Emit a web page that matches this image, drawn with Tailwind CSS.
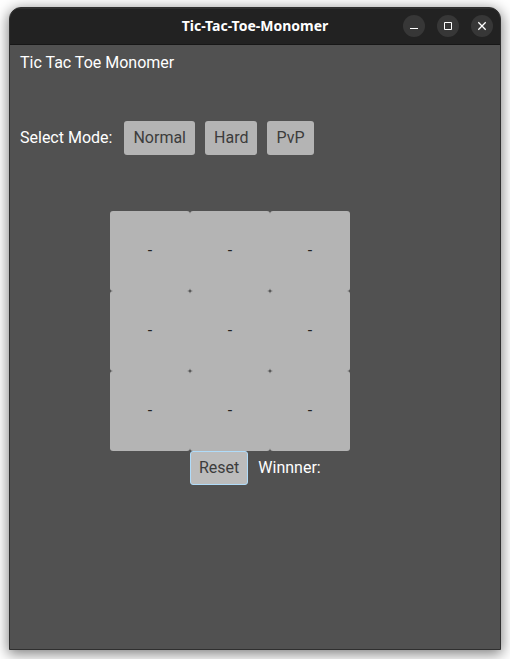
<!DOCTYPE html>
<html lang="en">
<head>
<meta charset="utf-8">
<meta name="viewport" content="width=device-width, initial-scale=1">
<title>Tic-Tac-Toe-Monomer</title>
<script src="https://cdn.jsdelivr.net/npm/@tailwindcss/browser@4"></script>
</head>
<body class="flex min-h-screen flex-col bg-white px-[9px] pt-[7px] pb-[9px] font-['Roboto',sans-serif] text-base text-white">
<div class="flex flex-1 flex-col overflow-hidden rounded-t-xl border border-[#2f2f2f] bg-[#515151] shadow-[0_3px_14px_1px_rgba(0,0,0,0.5)]">
  <header class="grid h-[37px] grid-cols-[1fr_auto_1fr] items-center border-t border-b border-t-[#303030] border-b-[#171717] bg-[#222222] px-[7px] pb-px">
    <h1 class="col-start-2 font-['Noto_Sans',sans-serif] text-sm font-bold">Tic-Tac-Toe-Monomer</h1>
    <div class="flex justify-end gap-3">
      <button type="button" aria-label="Minimize" class="size-[22px] rounded-full bg-[#373737]">
        <svg class="size-[22px]" viewBox="0 0 22 22" fill="none" stroke="#fff"><path d="M7 13.5h8"/></svg>
      </button>
      <button type="button" aria-label="Maximize" class="size-[22px] rounded-full bg-[#373737]">
        <svg class="size-[22px]" viewBox="0 0 22 22" fill="none" stroke="#fff"><path d="M7.5 7.5h7v7h-7z"/></svg>
      </button>
      <button type="button" aria-label="Close" class="size-[22px] rounded-full bg-[#373737]">
        <svg class="size-[22px]" viewBox="0 0 22 22" fill="none" stroke="#fff" stroke-width="1.3"><path d="M7.3 7.3l7.4 7.4M14.7 7.3l-7.4 7.4"/></svg>
      </button>
    </div>
  </header>
  <main class="px-2.5 pt-1.5">
    <p class="leading-6">Tic Tac Toe Monomer</p>
    <div class="mt-[46px] flex items-center gap-2.5" role="group" aria-labelledby="mode">
      <span id="mode" class="mr-0.5">Select Mode:</span>
      <button type="button" class="h-[34px] rounded-[3px] bg-[#b4b4b4] px-[9px] text-[#3c3c3c]">Normal</button>
      <button type="button" class="h-[34px] rounded-[3px] bg-[#b4b4b4] px-[9px] text-[#3c3c3c]">Hard</button>
      <button type="button" class="h-[34px] rounded-[3px] bg-[#b4b4b4] px-[9px] text-[#3c3c3c]">PvP</button>
    </div>
    <div class="mt-14 ml-[90px] grid w-60 grid-cols-3 text-[#222222]">
      <button type="button" class="h-20 rounded-[3px] bg-[#b4b4b4]">-</button>
      <button type="button" class="h-20 rounded-[3px] bg-[#b4b4b4]">-</button>
      <button type="button" class="h-20 rounded-[3px] bg-[#b4b4b4]">-</button>
      <button type="button" class="h-20 rounded-[3px] bg-[#b4b4b4]">-</button>
      <button type="button" class="h-20 rounded-[3px] bg-[#b4b4b4]">-</button>
      <button type="button" class="h-20 rounded-[3px] bg-[#b4b4b4]">-</button>
      <button type="button" class="h-20 rounded-[3px] bg-[#b4b4b4]">-</button>
      <button type="button" class="h-20 rounded-[3px] bg-[#b4b4b4]">-</button>
      <button type="button" class="h-20 rounded-[3px] bg-[#b4b4b4]">-</button>
    </div>
    <div class="ml-[170px] flex items-center gap-2.5">
      <button type="button" class="h-[34px] rounded-[3px] border border-[#b0dcfa] bg-[#bcbcbc] px-2 text-[#3c3c3c]">Reset</button>
      <span>Winnner:</span>
    </div>
  </main>
</div>
</body>
</html>
